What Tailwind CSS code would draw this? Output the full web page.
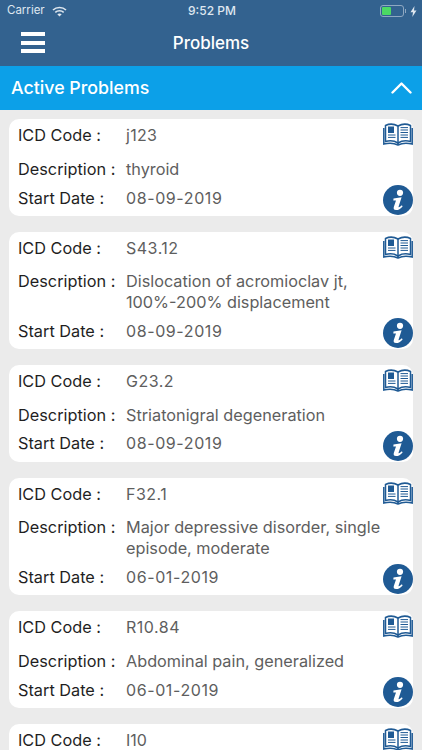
<!DOCTYPE html>
<html lang="en">
<head>
    <meta charset="UTF-8">
    <meta name="viewport" content="width=device-width, initial-scale=1.0">
    <title>Problems</title>
    <script src="https://cdn.jsdelivr.net/npm/@tailwindcss/browser@4"></script>
</head>
<body class="bg-[#ebebeb] font-['Inter',sans-serif] w-[422px] h-[750px] overflow-hidden">
    <svg class="hidden">
        <symbol id="book" viewBox="0 0 30 23">
            <g fill="none" stroke="#1f5a94" stroke-width="1.5">
                <path d="M2.5 2.5 C6 .8 11 .8 15 3 C19 .8 24 .8 27.5 2.5 V18.5 C24 17.5 19 17.5 15 20 C11 17.5 6 17.5 2.5 18.5 Z" fill="#fff"/>
                <path d="M15 3 V21"/>
                <path d="M.8 5 V21 C5 20 11 20 15 22 C19 20 25 20 29.2 21 V5"/>
                <path d="M5 3.5 H11 V10 H5 Z" fill="#1f5a94" stroke="none"/>
                <path d="M5 12 H12.5 M5 14.4 H12.5 M17.5 4.6 H25 M17.5 7 H25 M17.5 9.5 H25 M17.5 12 H25 M17.5 14.4 H25" stroke-width="1"/>
            </g>
        </symbol>
        <symbol id="info" viewBox="0 0 30 30">
            <circle cx="15" cy="15" r="15" fill="#1f5a94"/>
            <circle cx="17" cy="7.8" r="3.1" fill="#fff"/>
            <path fill="#fff" d="M10.5 13.6 L18.6 12.2 L15.6 21.4 C15.3 22.4 16 22.6 17 21.8 L18.9 20.3 L19.6 21.4 C17.6 23.8 15.5 25.1 13 25.1 C11 25.1 10.3 23.7 10.8 22 L13 15.6 L10.3 15.6 Z"/>
        </symbol>
    </svg>

    <!-- status bar + nav -->
    <div class="bg-[#33628f] h-[66px] text-white">
        <div class="flex items-center justify-between h-[22px] pl-[7px] pr-[5px] text-[#dfe7ef] text-[11.5px]">
            <div class="flex items-center gap-[7px] w-[120px]">
                <span>Carrier</span>
                <svg class="w-[15px] h-[11px]" viewBox="0 0 15 11" fill="none" stroke="currentColor" stroke-width="1.6">
                    <path d="M1 4 C4.5 .6 10.5 .6 14 4"/>
                    <path d="M3.3 6.3 C5.6 4.2 9.4 4.2 11.7 6.3"/>
                    <path d="M7.5 10.6 L5.3 8.3 C6.5 7.3 8.5 7.3 9.7 8.3 Z" fill="currentColor" stroke="none"/>
                </svg>
            </div>
            <span class="font-medium text-[12px]">9:52 PM</span>
            <div class="flex items-center justify-end w-[120px]">
                <div class="w-[24px] h-[12px] rounded-[3px] border border-[#8fa8c2] p-[1px]">
                    <div class="w-[9px] h-full bg-[#4cd964] rounded-[1px]"></div>
                </div>
                <div class="w-[1px] h-[4px] bg-[#8fa8c2] ml-[1px] mr-[4px]"></div>
                <svg class="w-[7px] h-[11px]" viewBox="0 0 7 11" fill="currentColor"><path d="M4.5 0 L0.5 6.3 H3 L2.3 11 L6.5 4.5 H4 Z"/></svg>
            </div>
        </div>
        <div class="relative flex items-center justify-center h-[44px]">
            <div class="absolute left-[21px] top-[10px] w-[24px] h-[21px] flex flex-col justify-between">
                <div class="h-[4px] bg-white"></div>
                <div class="h-[4px] bg-white"></div>
                <div class="h-[4px] bg-white"></div>
            </div>
            <span class="text-[17px] font-medium">Problems</span>
        </div>
    </div>

    <!-- section header -->
    <div class="bg-[#0ca0e8] h-[44px] flex items-center justify-between pl-[11px] pr-[10px] text-white">
        <span class="text-[17.8px] font-medium">Active Problems</span>
        <svg class="w-[21px] h-[14px]" viewBox="0 0 21 14" fill="none" stroke="white" stroke-width="2.4" stroke-linecap="round" stroke-linejoin="round">
            <path d="M1.5 11.5 L10.5 2.5 L19.5 11.5"/>
        </svg>
    </div>

    <!-- cards -->
    <div class="h-[640px] overflow-hidden pt-[9px] pl-[9px] pr-[9px] flex flex-col gap-[16px]">

        <div class="shrink-0 bg-white rounded-[10px] flex pl-[9px] h-[97px]">
            <div class="flex-1 text-[16.3px] leading-[21px] text-[#1f1f1f]">
                <div class="flex mt-[6px]"><span class="w-[108px]">ICD Code :</span><span class="text-[#5e5e5e] text-[16px] flex-1 tracking-[0.25px]">j123</span></div>
                <div class="flex mt-[13px]"><span class="w-[108px]">Description :</span><span class="text-[#5e5e5e] flex-1 text-[16.25px]">thyroid</span></div>
                <div class="flex mt-[8px]"><span class="w-[108px]">Start Date :</span><span class="text-[#5e5e5e] text-[16px] flex-1 tracking-[0.6px]">08-09-2019</span></div>
            </div>
            <div class="w-[30px] flex flex-col justify-between pt-[4px] pb-[1px]">
                <svg class="w-[30px] h-[23px]"><use href="#book"/></svg>
                <svg class="w-[30px] h-[30px]"><use href="#info"/></svg>
            </div>
        </div>

        <div class="shrink-0 bg-white rounded-[10px] flex pl-[9px] h-[117px]">
            <div class="flex-1 text-[16.3px] leading-[21px] text-[#1f1f1f]">
                <div class="flex mt-[6px]"><span class="w-[108px]">ICD Code :</span><span class="text-[#5e5e5e] text-[16px] flex-1 tracking-[0.5px]">S43.12</span></div>
                <div class="flex mt-[12px]"><span class="w-[108px]">Description :</span><span class="text-[#5e5e5e] flex-1 text-[16.25px]">Dislocation of acromioclav jt,<br>100%-200% displacement</span></div>
                <div class="flex mt-[8px]"><span class="w-[108px]">Start Date :</span><span class="text-[#5e5e5e] text-[16px] flex-1 tracking-[0.6px]">08-09-2019</span></div>
            </div>
            <div class="w-[30px] flex flex-col justify-between pt-[4px] pb-[1px]">
                <svg class="w-[30px] h-[23px]"><use href="#book"/></svg>
                <svg class="w-[30px] h-[30px]"><use href="#info"/></svg>
            </div>
        </div>

        <div class="shrink-0 bg-white rounded-[10px] flex pl-[9px] h-[97px]">
            <div class="flex-1 text-[16.3px] leading-[21px] text-[#1f1f1f]">
                <div class="flex mt-[6px]"><span class="w-[108px]">ICD Code :</span><span class="text-[#5e5e5e] text-[16px] flex-1 tracking-[0.5px]">G23.2</span></div>
                <div class="flex mt-[13px]"><span class="w-[108px]">Description :</span><span class="text-[#5e5e5e] flex-1 text-[16.25px]">Striatonigral degeneration</span></div>
                <div class="flex mt-[7px]"><span class="w-[108px]">Start Date :</span><span class="text-[#5e5e5e] text-[16px] flex-1 tracking-[0.6px]">08-09-2019</span></div>
            </div>
            <div class="w-[30px] flex flex-col justify-between pt-[4px] pb-[1px]">
                <svg class="w-[30px] h-[23px]"><use href="#book"/></svg>
                <svg class="w-[30px] h-[30px]"><use href="#info"/></svg>
            </div>
        </div>

        <div class="shrink-0 bg-white rounded-[10px] flex pl-[9px] h-[117px]">
            <div class="flex-1 text-[16.3px] leading-[21px] text-[#1f1f1f]">
                <div class="flex mt-[6px]"><span class="w-[108px]">ICD Code :</span><span class="text-[#5e5e5e] text-[16px] flex-1 tracking-[0.5px]">F32.1</span></div>
                <div class="flex mt-[12px]"><span class="w-[108px]">Description :</span><span class="text-[#5e5e5e] flex-1 text-[16.25px]">Major depressive disorder, single<br>episode, moderate</span></div>
                <div class="flex mt-[8px]"><span class="w-[108px]">Start Date :</span><span class="text-[#5e5e5e] text-[16px] flex-1 tracking-[0.6px]">06-01-2019</span></div>
            </div>
            <div class="w-[30px] flex flex-col justify-between pt-[4px] pb-[1px]">
                <svg class="w-[30px] h-[23px]"><use href="#book"/></svg>
                <svg class="w-[30px] h-[30px]"><use href="#info"/></svg>
            </div>
        </div>

        <div class="shrink-0 bg-white rounded-[10px] flex pl-[9px] h-[97px]">
            <div class="flex-1 text-[16.3px] leading-[21px] text-[#1f1f1f]">
                <div class="flex mt-[6px]"><span class="w-[108px]">ICD Code :</span><span class="text-[#5e5e5e] text-[16px] flex-1 tracking-[0.5px]">R10.84</span></div>
                <div class="flex mt-[13px]"><span class="w-[108px]">Description :</span><span class="text-[#5e5e5e] flex-1 text-[16.25px]">Abdominal pain, generalized</span></div>
                <div class="flex mt-[8px]"><span class="w-[108px]">Start Date :</span><span class="text-[#5e5e5e] text-[16px] flex-1 tracking-[0.6px]">06-01-2019</span></div>
            </div>
            <div class="w-[30px] flex flex-col justify-between pt-[4px] pb-[1px]">
                <svg class="w-[30px] h-[23px]"><use href="#book"/></svg>
                <svg class="w-[30px] h-[30px]"><use href="#info"/></svg>
            </div>
        </div>

        <div class="shrink-0 bg-white rounded-[10px] flex pl-[9px] h-[97px]">
            <div class="flex-1 text-[16.3px] leading-[21px] text-[#1f1f1f]">
                <div class="flex mt-[6px]"><span class="w-[108px]">ICD Code :</span><span class="text-[#5e5e5e] text-[16px] flex-1">I10</span></div>
            </div>
            <div class="w-[30px] flex flex-col justify-between pt-[4px] pb-[1px]">
                <svg class="w-[30px] h-[23px]"><use href="#book"/></svg>
            </div>
        </div>
    </div>
</body>
</html>
